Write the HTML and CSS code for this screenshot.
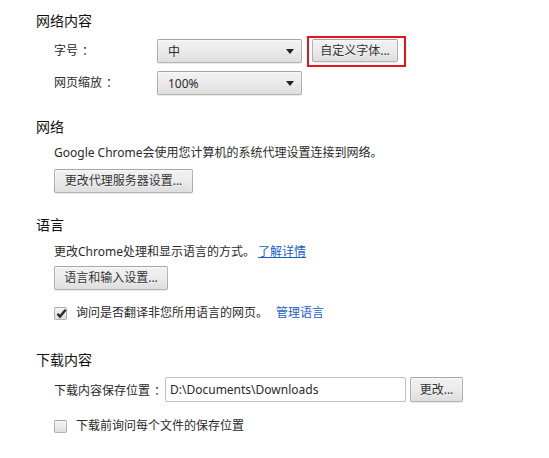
FILE: index.html
```html
<!DOCTYPE html>
<html lang="zh-CN">
<head>
<meta charset="utf-8">
<link rel="stylesheet" href="styles.css">
</head>
<body>
<div class="page">
  <section class="sec sec-content">
    <h3 class="sec-title">网络内容</h3>
    <div class="sec-body">
      <div class="form-row">
        <span class="label label-font">字号<span class="colon">：</span></span>
        <div class="select"><span>中</span><svg class="arrow" width="8" height="5" viewBox="0 0 8 5"><path d="M0 0H8L4 5Z" fill="#222"/></svg></div>
        <div class="highlight"><button class="btn btn-font">自定义字体...</button></div>
      </div>
      <div class="form-row form-row-2">
        <span class="label label-font">网页缩放<span class="colon">：</span></span>
        <div class="select"><span>100%</span><svg class="arrow" width="8" height="5" viewBox="0 0 8 5"><path d="M0 0H8L4 5Z" fill="#222"/></svg></div>
      </div>
    </div>
  </section>

  <section class="sec sec-network">
    <h3 class="sec-title">网络</h3>
    <div class="sec-body">
      <p class="text">Google Chrome会使用您计算机的系统代理设置连接到网络。</p>
      <button class="btn btn-proxy">更改代理服务器设置...</button>
    </div>
  </section>

  <section class="sec sec-lang">
    <h3 class="sec-title">语言</h3>
    <div class="sec-body">
      <p class="text">更改Chrome处理和显示语言的方式。 <a class="link link-u" href="#">了解详情</a></p>
      <button class="btn btn-lang">语言和输入设置...</button>
      <label class="check-row check-row-lang">
        <span class="checkbox checked"><svg width="11" height="11" viewBox="0 0 11 11"><path d="M1.5 5.8L4 8.6L9.6 1.8" fill="none" stroke="#2b2b2b" stroke-width="2.4" stroke-linejoin="miter"/></svg></span>
        <span class="check-text">询问是否翻译非您所用语言的网页。</span>
        <a class="link" href="#">管理语言</a>
      </label>
    </div>
  </section>

  <section class="sec sec-download">
    <h3 class="sec-title">下载内容</h3>
    <div class="sec-body">
      <div class="form-row dl-row">
        <span class="label-dl">下载内容保存位置<span class="colon">：</span></span>
        <div class="input">D:\Documents\Downloads</div>
        <button class="btn btn-change">更改...</button>
      </div>
      <label class="check-row check-row-dl">
        <span class="checkbox"></span>
        <span class="check-text">下载前询问每个文件的保存位置</span>
      </label>
    </div>
  </section>
</div>
</body>
</html>
```

FILE: styles.css
```css
* { box-sizing: border-box; }

html, body {
  margin: 0;
  padding: 0;
  background: #ffffff;
}

body {
  font-family: "Segoe UI", "Noto Sans", "Noto Sans CJK SC", sans-serif;
  font-size: 12px;
  color: #2a2a2a;
}

.page {
  padding: 11px 0 0 36px;
  width: 549px;
  height: 458px;
  overflow: hidden;
}

.sec-title {
  margin: 0;
  font-size: 14px;
  font-weight: normal;
  line-height: 20px;
  height: 20px;
  color: #111;
}

.sec-body {
  padding-left: 18px;
}

.sec-network { margin-top: 22px; }
.sec-lang { margin-top: 22px; }
.sec-download { margin-top: 28px; }

.form-row {
  display: flex;
  align-items: center;
  height: 24px;
  margin-top: 8px;
}

.form-row-2 { margin-top: 8px; }

.colon {
  margin-left: 4px;
}

.label {
  width: 103px;
  flex: none;
  line-height: 18px;
  white-space: nowrap;
}

.label-font { color: #2a2a2a; }

.select {
  width: 145px;
  height: 24px;
  flex: none;
  display: flex;
  align-items: center;
  justify-content: space-between;
  padding: 0 7px 0 10px;
  border: 1px solid rgba(0, 0, 0, 0.25);
  border-radius: 2px;
  background: linear-gradient(#f0f0f0, #ededed 38%, #dedede);
  box-shadow: 0 1px 0 rgba(0, 0, 0, 0.08), inset 0 1px 2px rgba(255, 255, 255, 0.75);
  color: #2a2a2a;
}

.arrow { display: block; }

.highlight {
  margin-left: 5px;
  border: 2px solid #e8141b;
  padding: 2px 6px 3px 3px;
  height: 31px;
  display: flex;
  align-items: center;
}

.btn {
  font-family: inherit;
  font-size: 12px;
  color: #333;
  height: 24px;
  margin: 0;
  padding: 0;
  border: 1px solid rgba(0, 0, 0, 0.25);
  border-radius: 2px;
  background: linear-gradient(#f0f0f0, #ededed 38%, #dedede);
  box-shadow: 0 1px 0 rgba(0, 0, 0, 0.08), inset 0 1px 2px rgba(255, 255, 255, 0.75);
  text-shadow: 0 1px 0 #f0f0f0;
  display: flex;
  align-items: center;
  justify-content: center;
  line-height: 1;
  white-space: nowrap;
}

.btn-font { width: 86px; height: 23px; }
.btn-proxy { width: 139px; margin-top: 7px; }
.btn-lang { width: 114px; margin-top: 5px; }
.btn-change { width: 53px; height: 25px; margin-left: 4px; }

.text {
  margin: 7px 0 0;
  line-height: 18px;
  color: #2a2a2a;
  white-space: nowrap;
}

.sec-lang .text { margin-top: 8px; }

.link {
  color: #1a5fcc;
  text-decoration: none;
}

.link-u { text-decoration: underline; }

.check-row {
  display: flex;
  align-items: center;
  line-height: 18px;
  height: 18px;
  white-space: nowrap;
}

.check-row-lang { margin-top: 14px; }
.check-row-dl { margin-top: 15px; }

.checkbox {
  width: 13px;
  height: 13px;
  flex: none;
  border: 1px solid rgba(0, 0, 0, 0.25);
  border-radius: 2px;
  background: linear-gradient(#f0f0f0, #ededed 38%, #dedede);
  box-shadow: inset 0 1px 2px rgba(255, 255, 255, 0.75);
  margin-right: 9px;
  position: relative;
}

.checkbox svg {
  position: absolute;
  left: 1px;
  top: 0;
}

.check-text {
  color: #2a2a2a;
  margin-right: 8px;
}

.dl-row {
  height: 25px;
  margin-top: 7px;
}

.label-dl {
  width: 111px;
  flex: none;
  color: #2a2a2a;
  white-space: nowrap;
}

.input {
  width: 241px;
  height: 25px;
  flex: none;
  border: 1px solid #bfbfbf;
  border-radius: 2px;
  background: #fff;
  padding: 0 4px;
  display: flex;
  align-items: center;
  color: #2a2a2a;
}
```
